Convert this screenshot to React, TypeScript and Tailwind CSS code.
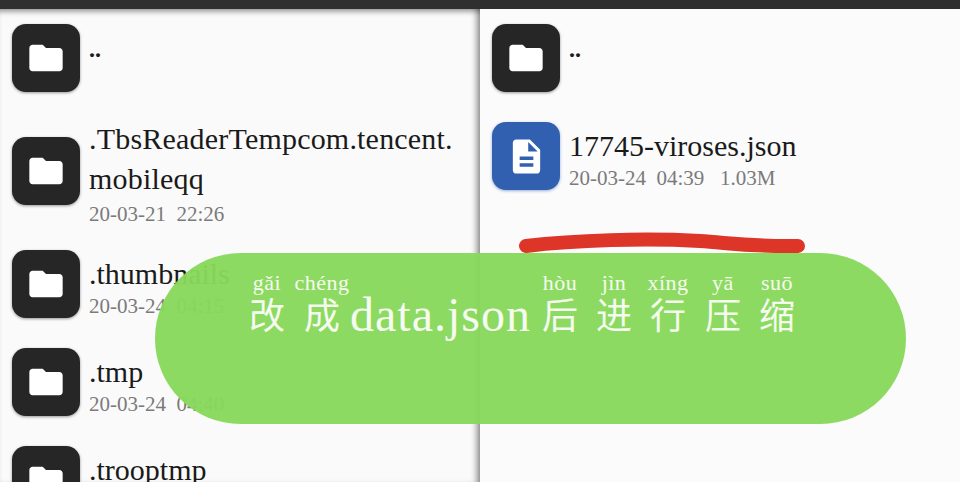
const serif = "font-['Liberation_Serif','Noto_Sans_CJK_SC',serif]";

function FolderIcon() {
  return (
    <div className="flex h-[68px] w-[68px] shrink-0 items-center justify-center rounded-[14px] bg-[#262626] shadow-[0_1px_3px_rgba(0,0,0,0.4)]">
      <svg width="40" height="40" viewBox="0 0 24 24" fill="#fff">
        <path d="M10 4H4c-1.1 0-2 .9-2 2v12c0 1.1.9 2 2 2h16c1.1 0 2-.9 2-2V8c0-1.1-.9-2-2-2h-8l-2-2z" />
      </svg>
    </div>
  );
}

function FileIcon() {
  return (
    <div className="flex h-[68px] w-[68px] shrink-0 items-center justify-center rounded-[14px] bg-[#3160b0] shadow-[0_1px_3px_rgba(49,96,176,0.5)]">
      <svg width="41" height="41" viewBox="0 0 24 24" fill="#fff">
        <path d="M14 2H6c-1.1 0-2 .9-2 2v16c0 1.1.9 2 2 2h12c1.1 0 2-.9 2-2V8l-6-6zm2 16H8v-2h8v2zm0-4H8v-2h8v2zm-3-5V3.5L18.5 9H13z" />
      </svg>
    </div>
  );
}

function Row({ name, meta, file }: { name: string; meta?: string; file?: boolean }) {
  return (
    <div className="flex h-[68px] items-start gap-[9px] pl-3">
      {file ? <FileIcon /> : <FolderIcon />}
      <div className="min-w-0 whitespace-nowrap pt-[6px]">
        <div className="text-[30px] leading-[36px] text-[#1a1a1a]">{name}</div>
        {meta ? <div className="mt-[1px] text-[21px] leading-[26px] text-[#7a7a7a]">{meta}</div> : null}
      </div>
    </div>
  );
}

function UpRow() {
  return (
    <div className="flex h-[68px] items-center gap-[9px] pl-3">
      <FolderIcon />
      <div className="mb-[18px] text-[24px] font-bold leading-[30px] text-[#1a1a1a]">..</div>
    </div>
  );
}

function LeftPane() {
  return (
    <div className="relative z-10 h-full w-[480px] shrink-0 overflow-hidden bg-[#fafafa] pt-[15px] shadow-[inset_-7px_0_6px_-4px_rgba(0,0,0,0.45),inset_0_6px_5px_-3px_rgba(0,0,0,0.35)]">
      <UpRow />
      <div className="mt-[23px] flex items-center gap-[9px] pl-3">
        <FolderIcon />
        <div className="whitespace-nowrap pt-[4px]">
          <div className="text-[30px] leading-[40px] tracking-[0.2px] text-[#1a1a1a]">
            .TbsReaderTempcom.tencent.
            <br />
            mobileqq
          </div>
          <div className="mt-[2px] text-[21px] leading-[26px] text-[#7a7a7a]">20-03-21&nbsp;&nbsp;22:26</div>
        </div>
      </div>
      <div className="mt-[23px] flex flex-col gap-[30px]">
        <Row name=".thumbnails" meta={"20-03-24\u00a0\u00a004:15"} />
        <Row name=".tmp" meta={"20-03-24\u00a0\u00a004:40"} />
        <Row name=".trooptmp" />
      </div>
    </div>
  );
}

function RightPane() {
  return (
    <div className="h-full flex-1 overflow-hidden bg-[#fbfbfb] pt-[15px]">
      <UpRow />
      <div className="mt-[30px]">
        <Row file name="17745-viroses.json" meta={"20-03-24\u00a0\u00a004:39\u00a0\u00a0\u00a01.03M"} />
      </div>
    </div>
  );
}

function Cell({ py, han, className }: { py: string; han: string; className: string }) {
  return (
    <div className={`flex flex-col items-center ${className}`}>
      <span className="whitespace-nowrap text-[22px] leading-[24px] tracking-[0.5px]">{py}</span>
      <span className="mt-[2px] text-[36px] leading-[40px]">{han}</span>
    </div>
  );
}

function Banner() {
  return (
    <div className="absolute left-[155px] top-[253px] z-20 flex h-[171px] w-[751px] items-start rounded-full bg-[#87d85b]/96 pl-[92px] pt-[18px] text-[#f6fbef]">
      <Cell py="gǎi" han="改" className="w-[40px]" />
      <Cell py="chéng" han="成" className="ml-[15px] w-[40px]" />
      <div className="ml-[8px] mt-[24px] w-[180px] whitespace-nowrap text-[48px] leading-[40px] tracking-[1px]">data.json</div>
      <Cell py="hòu" han="后" className="ml-[10px] w-[40px]" />
      <Cell py="jìn" han="进" className="ml-[14px] w-[40px]" />
      <Cell py="xíng" han="行" className="ml-[14px] w-[40px]" />
      <Cell py="yā" han="压" className="ml-[15px] w-[40px]" />
      <Cell py="suō" han="缩" className="ml-[14px] w-[40px]" />
    </div>
  );
}

function RedStroke() {
  return (
    <svg className="absolute left-[515px] top-[230px] z-10" width="295" height="30" viewBox="0 0 295 30" fill="none">
      <path
        d="M11 16 C60 10 130 8 185 11 C215 13 240 17 283 16"
        stroke="#dd3527"
        strokeWidth="14"
        strokeLinecap="round"
      />
    </svg>
  );
}

export default function App() {
  return (
    <div className={`relative flex h-[482px] w-[960px] flex-col overflow-hidden ${serif}`}>
      <div className="h-[9px] shrink-0 bg-[#2f2f2f]" />
      <div className="flex min-h-0 flex-1">
        <LeftPane />
        <RightPane />
      </div>
      <RedStroke />
      <Banner />
    </div>
  );
}
